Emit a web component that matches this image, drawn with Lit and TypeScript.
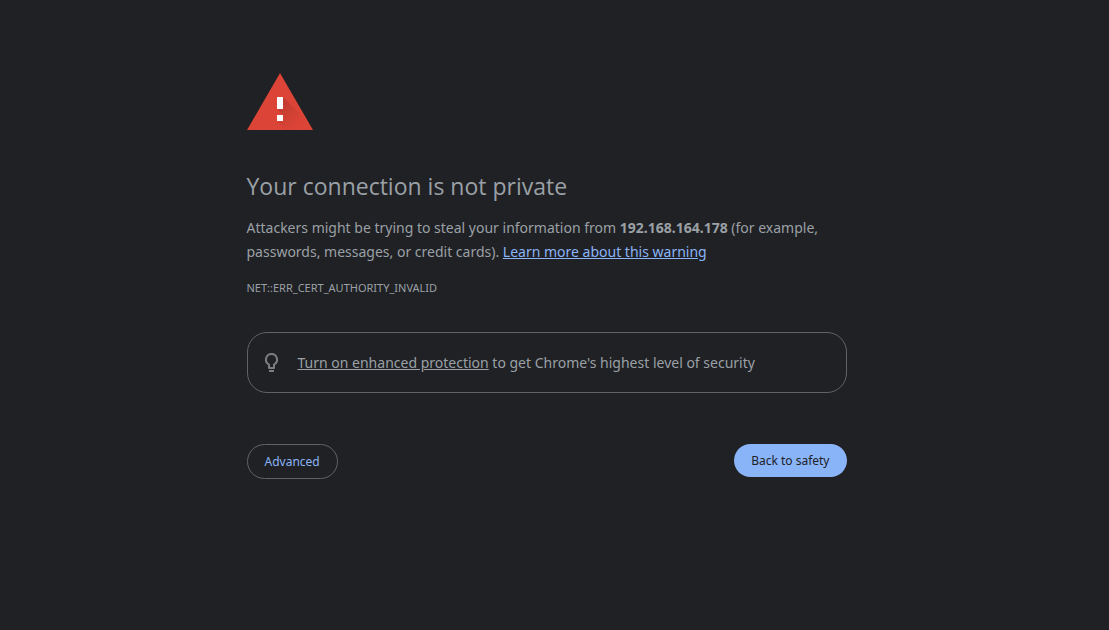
import { LitElement, html, css } from "lit";
import { customElement } from "lit/decorators.js";

@customElement("app-root")
export class AppRoot extends LitElement {
  static styles = css`
    :host {
      display: block;
      box-sizing: border-box;
      min-height: 100vh;
      padding: 72px 40px 40px 24px;
      background: #202124;
      color: #9aa0a6;
      font-family: "Noto Sans", "Open Sans", sans-serif;
      font-size: 14px;
      line-height: 24px;
    }
    * { box-sizing: border-box; }
    .page { max-width: 600px; margin: 0 auto; }
    .warning { display: block; width: 66px; height: 58px; }
    h1 {
      margin: 40px 0 14px;
      font-family: "Open Sans", "Noto Sans", sans-serif;
      font-size: 23px;
      font-weight: 400;
      line-height: 32px;
    }
    p { margin: 0; }
    a { color: #8ab4f8; }
    .code { margin-top: 16px; font-size: 11px; line-height: 16px; }
    .hint {
      display: flex;
      align-items: center;
      gap: 14px;
      margin-top: 36px;
      padding: 18px 12px 17px;
      border: 1px solid #5f6368;
      border-radius: 20px;
    }
    .bulb { flex: none; width: 24px; height: 24px; }
    .hint a { color: inherit; }
    .actions {
      display: flex;
      justify-content: space-between;
      align-items: flex-start;
      margin-top: 51px;
    }
    button {
      padding: 8px 17px;
      border: 0;
      border-radius: 20px;
      font-family: inherit;
      font-size: 12px;
      line-height: 17px;
      cursor: pointer;
    }
    .secondary { border: 1px solid #5f6368; background: transparent; color: #8ab4f8; }
    .primary { background: #8ab4f8; color: #202124; }
  `;

  render() {
    return html`
      <main class="page">
        <svg class="warning" viewBox="0 0 66 58" aria-hidden="true">
          <defs>
            <linearGradient id="shade" gradientUnits="userSpaceOnUse" x1="32" y1="30" x2="50" y2="52">
              <stop offset="0" stop-color="#8c2a20" stop-opacity=".35" />
              <stop offset="1" stop-color="#8c2a20" stop-opacity="0" />
            </linearGradient>
          </defs>
          <path fill="#db4437" d="M33 1 66 58H0z" />
          <path fill="url(#shade)" d="M36 25 53 42 62 58H39L30 49 36 43 30 37z" />
          <path fill="#fff" d="M30 25h6v12h-6zM30 43h6v6h-6z" />
        </svg>
        <h1>Your connection is not private</h1>
        <p>Attackers might be trying to steal your information from <strong>192.168.164.178</strong> (for example, passwords, messages, or credit cards). <a href="#learn">Learn more about this warning</a></p>
        <p class="code">NET::ERR_CERT_AUTHORITY_INVALID</p>
        <section class="hint">
          <svg class="bulb" viewBox="0 0 24 24" aria-hidden="true">
            <path fill="#7c7d80" d="M9 19h5v2H9zM11.500 2a6.500 6.500 0 0 0-3.500 12v3q0 1 1 1h5q1 0 1-1v-3A6.500 6.500 0 0 0 11.500 2zm0 2a4.600 4.600 0 0 1 2.500 8.400l-1 .7V16h-3v-2.900l-1-.7A4.600 4.600 0 0 1 11.500 4z" />
          </svg>
          <p><a href="#protection">Turn on enhanced protection</a> to get Chrome's highest level of security</p>
        </section>
        <div class="actions">
          <button class="secondary" type="button">Advanced</button>
          <button class="primary" type="button">Back to safety</button>
        </div>
      </main>
    `;
  }
}
